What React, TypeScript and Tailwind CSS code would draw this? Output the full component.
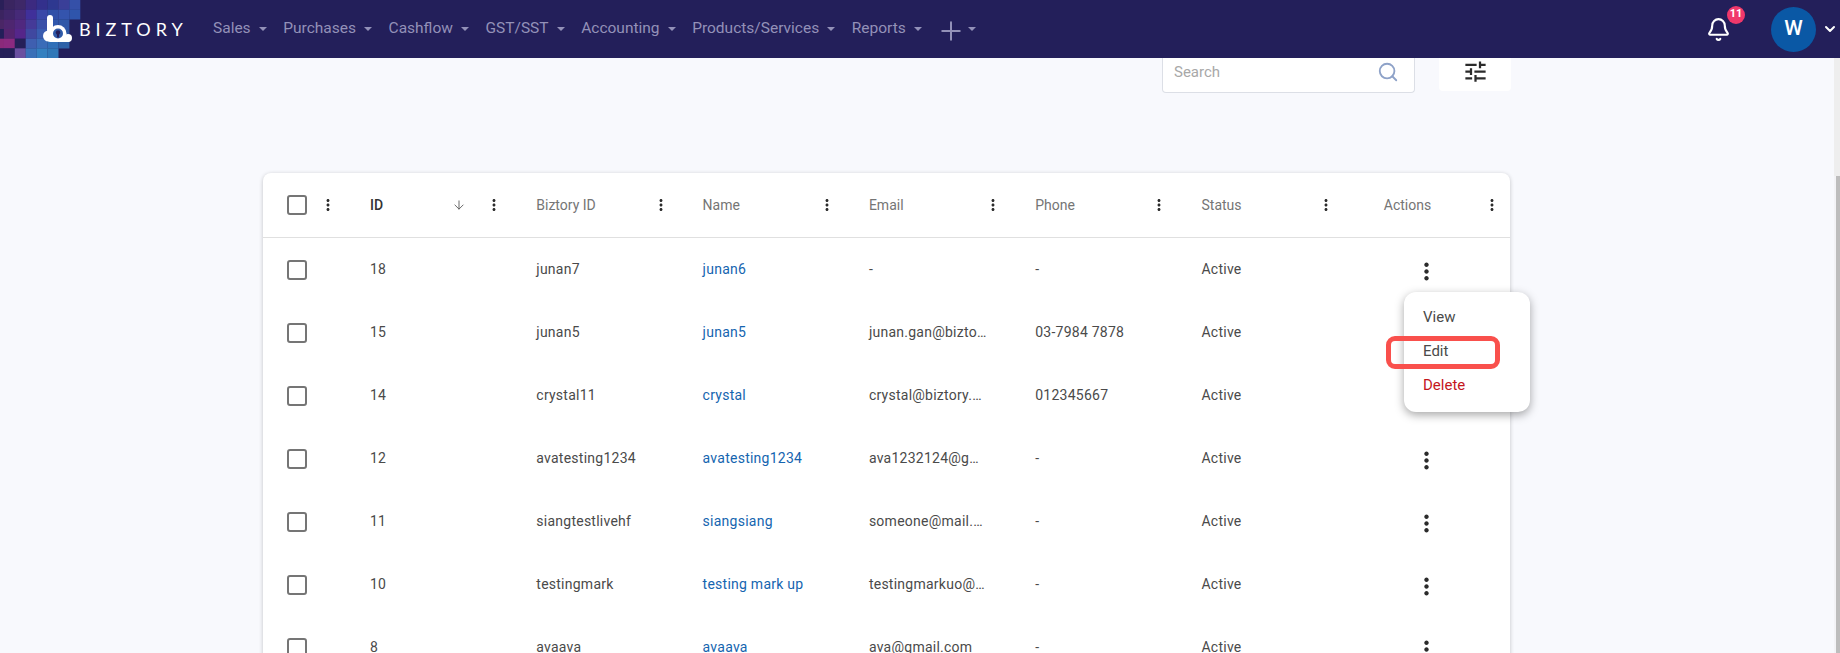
import React from "react";
import { Bell, ChevronDown, Plus, Search, ArrowDown } from "lucide-react";

const MOSAIC = [
  ["#2a2058", "#3a2560", "#3e2868", "#3c2a80", "#33308c", "#2e3890", "#3a3f98", "#3550a8"],
  ["#3b2460", "#40266a", "#462a78", "#40309a", "#3a48a8", "#3050a8", "#3454ad", "#2f55ac"],
  ["#4a2666", "#4e2670", "#50287f", "#453a98", "#3a50a8", "#3058ad", "#3058a8", ""],
  ["#231f59", "#55246f", "#55268a", "#4048a0", "#3a5cb0", "#305fb0", "#2e58a5", ""],
  ["#8a2a7a", "#8b2a80", "#252058", "#3f5fb0", "#3a6cb8", "#3070b8", "#2e62a8", ""],
  ["#252058", "#252058", "#6a50a0", "#3a70b8", "#3480c0", "#3078b8", "", ""],
];

const NAV_ITEMS = ["Sales", "Purchases", "Cashflow", "GST/SST", "Accounting", "Products/Services", "Reports"];

const ROWS = [
  { id: "18", biz: "junan7", name: "junan6", email: "-", phone: "-" },
  { id: "15", biz: "junan5", name: "junan5", email: "junan.gan@bizto…", phone: "03-7984 7878" },
  { id: "14", biz: "crystal11", name: "crystal", email: "crystal@biztory.…", phone: "012345667" },
  { id: "12", biz: "avatesting1234", name: "avatesting1234", email: "ava1232124@g…", phone: "-" },
  { id: "11", biz: "siangtestlivehf", name: "siangsiang", email: "someone@mail.…", phone: "-" },
  { id: "10", biz: "testingmark", name: "testing mark up", email: "testingmarkuo@…", phone: "-" },
  { id: "8", biz: "avaava", name: "avaava", email: "ava@gmail.com", phone: "-" },
];

const GRID = "grid grid-cols-[91px_repeat(7,166.3px)]";

const MoreVert = ({ size }: { size: number }) => (
  <svg width={size} height={size} viewBox="0 0 24 24" fill="#2b2b2b" className="shrink-0">
    <path d="M12 8c1.1 0 2-.9 2-2s-.9-2-2-2-2 .9-2 2 .9 2 2 2zm0 2c-1.1 0-2 .9-2 2s.9 2 2 2 2-.9 2-2-.9-2-2-2zm0 6c-1.1 0-2 .9-2 2s.9 2 2 2 2-.9 2-2-.9-2-2-2z" />
  </svg>
);

const Caret = () => <span className="ml-2 h-0 w-0 border-x-[4px] border-t-[4px] border-x-transparent border-t-[#9391b8]" />;

const Checkbox = () => <span className="block h-5 w-5 shrink-0 rounded-[3px] border-2 border-[#757575]" />;

const HeaderCell = ({ label }: { label: string }) => (
  <div className="flex items-center justify-between pl-4 pr-[17px]">
    <span className="text-[#757575]">{label}</span>
    <MoreVert size={18} />
  </div>
);

const Logo = () => (
  <div className="relative flex h-full w-[213px] shrink-0 items-center">
    {/* pixel mosaic behind the logo */}
    <svg width="84" height="58" className="absolute left-0 top-0">
      {MOSAIC.map((row, y) =>
        row.map((fill, x) => (fill ? <rect key={`${x}-${y}`} x={x * 10.9 - 7} y={y * 9.67} width="11" height="9.8" fill={fill} /> : null)),
      )}
    </svg>
    <svg width="30" height="27" viewBox="0 0 30 27" className="relative ml-[43px] mt-[-2px] shrink-0">
      <rect x="4" y="0" width="6" height="18" rx="3" fill="#fff" />
      <circle cx="5.5" cy="21" r="5.5" fill="#fff" />
      <circle cx="25" cy="23" r="4" fill="#fff" />
      <circle cx="15" cy="18.5" r="8.5" fill="#fff" />
      <rect x="5" y="22" width="22" height="5" rx="2.5" fill="#fff" />
      <circle cx="15" cy="18.5" r="5" fill="#2f5aa8" />
      <circle cx="15" cy="17.5" r="2.2" fill="#231f5a" />
      <rect x="14" y="17.5" width="2" height="5" fill="#231f5a" />
    </svg>
    <span className="relative ml-[6px] font-['Lato',sans-serif] text-[18px] leading-none tracking-[0.275em] text-white">BIZTORY</span>
  </div>
);

const TopNav = () => (
  <header className="flex h-[58px] shrink-0 items-center bg-[#231f5a] text-[15.5px] text-[#9391b8]">
    <Logo />
    <nav className="flex items-center">
      {NAV_ITEMS.map((item) => (
        <div key={item} className="mr-[16.6px] flex items-center">
          <span>{item}</span>
          <Caret />
        </div>
      ))}
      <div className="ml-[-2px] flex items-center">
        <Plus size={30} strokeWidth={1.6} className="-mr-[6px] mt-[4px]" />
        <Caret />
      </div>
    </nav>
    <div className="ml-auto flex items-center pr-[2px]">
      <div className="relative mr-[40px]">
        <Bell size={25} strokeWidth={2} color="#fff" />
        <span className="absolute left-[21px] top-[-11px] flex h-[18px] w-[18px] items-center justify-center rounded-full bg-[#f0386b] text-[11px] font-bold text-white">11</span>
      </div>
      <div className="flex h-[45px] w-[45px] items-center justify-center rounded-full bg-[#0a58a5] text-[21px] font-medium text-white">W</div>
      <ChevronDown size={16} strokeWidth={3} color="#fff" className="ml-[6px]" />
    </div>
  </header>
);

const Toolbar = () => (
  <div className="flex items-start justify-end pr-[323px]">
    <div className="flex h-[35px] w-[253px] items-center justify-between rounded-b-[4px] border border-t-0 border-[#dcdfe6] bg-white pb-[6px] pl-[11px] pr-[15px]">
      <span className="text-[15px] text-[#a8a8a8]">Search</span>
      <Search size={22} strokeWidth={2} color="#8ea2c8" />
    </div>
    <div className="ml-[24px] flex h-[33px] w-[72px] items-start justify-center rounded-b-[4px] bg-white">
      <svg width="27" height="27" viewBox="0 0 24 24" fill="#2b2b2b">
        <path d="M3 17v2h6v-2H3zM3 5v2h10V5H3zm10 16v-2h8v-2h-8v-2h-2v6h2zM7 9v2H3v2h4v2h2V9H7zm14 4v-2H11v2h10zm-6-4h2V7h4V5h-4V3h-2v6z" />
      </svg>
    </div>
  </div>
);

const RowMenu = () => (
  <>
    <div className="absolute left-[1141px] top-[119px] flex h-[120px] w-[126px] flex-col justify-center gap-[14px] rounded-xl bg-white pb-[2px] pl-[19px] text-[15px] leading-[20px] text-[#4a4a4a] shadow-[0_3px_10px_rgba(0,0,0,0.35)]">
      <span>View</span>
      <span>Edit</span>
      <span className="text-[#c4161c]">Delete</span>
    </div>
    <div className="absolute left-[1123px] top-[163px] h-[33px] w-[114px] rounded-[9px] border-[5px] border-[#f9504c]" />
  </>
);

const UserTable = () => (
  <div className="relative ml-[263px] mt-[80px] w-[1247px]">
    <div className="overflow-hidden rounded-t-lg bg-white text-[14px] text-[#4a4a4a] shadow-[0_1px_4px_rgba(0,0,0,0.22)]">
      <div className={`${GRID} h-[65px] border-b border-[#e0e0e0]`}>
        <div className="flex items-center pl-[24px]">
          <Checkbox />
          <span className="ml-[12px]"><MoreVert size={18} /></span>
        </div>
        <div className="flex items-center pl-4 pr-[17px]">
          <span className="font-medium text-[#333]">ID</span>
          <ArrowDown size={14} strokeWidth={1.5} color="#555" className="ml-auto mr-[19px]" />
          <MoreVert size={18} />
        </div>
        <HeaderCell label="Biztory ID" />
        <HeaderCell label="Name" />
        <HeaderCell label="Email" />
        <HeaderCell label="Phone" />
        <HeaderCell label="Status" />
        <div className="flex items-center justify-between pl-[32px] pr-[17px]">
          <span className="text-[#757575]">Actions</span>
          <MoreVert size={18} />
        </div>
      </div>
      {ROWS.map((row) => (
        <div key={row.id} className={`${GRID} h-[63px] items-center tracking-[0.25px]`}>
          <div className="mt-[1px] pl-[24px]"><Checkbox /></div>
          <div className="pl-4">{row.id}</div>
          <div className="pl-4">{row.biz}</div>
          <div className="pl-4 text-[#1565b0]">{row.name}</div>
          <div className="pl-4">{row.email}</div>
          <div className="pl-4">{row.phone}</div>
          <div className="pl-4">Active</div>
          <div className="mt-[3px] pl-[61px]"><MoreVert size={27} /></div>
        </div>
      ))}
    </div>
    <RowMenu />
  </div>
);

export default function App() {
  return (
    <div className="flex h-[653px] w-[1840px] flex-col overflow-hidden bg-[#f8f9fd] font-['Roboto',sans-serif]">
      <TopNav />
      <div className="flex min-h-0 flex-1">
        <main className="min-w-0 flex-1">
          <Toolbar />
          <UserTable />
        </main>
        {/* scrollbar */}
        <div className="flex w-[6px] flex-col bg-[#f3f3f6]">
          <div className="h-[118px] bg-[#eeeeee]" />
          <div className="ml-[2px] flex-1 bg-[#bdbdbd]" />
        </div>
      </div>
    </div>
  );
}
